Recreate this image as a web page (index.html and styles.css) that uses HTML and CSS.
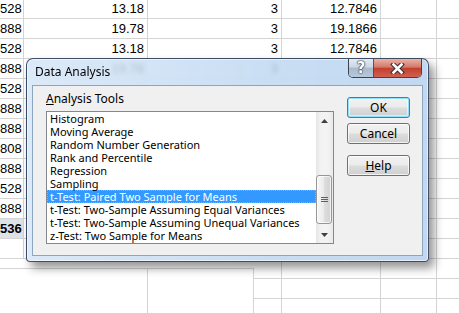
FILE: index.html
```html
<!DOCTYPE html>
<html>
	<head>
		<meta charset="UTF-8">
		<title>Data Analysis</title>
		<link rel="stylesheet" href="styles.css">
	</head>
	<body>
		<div id="screen">
			<div class="sheet">
				<div class="row"><div class="c0">528</div><div class="c1">13.18</div><div class="c2">3</div><div class="c3">12.7846</div><div class="c4"></div><div class="c5"></div></div>
				<div class="row"><div class="c0">888</div><div class="c1">19.78</div><div class="c2">3</div><div class="c3">19.1866</div><div class="c4"></div><div class="c5"></div></div>
				<div class="row"><div class="c0">528</div><div class="c1">13.18</div><div class="c2">3</div><div class="c3">12.7846</div><div class="c4"></div><div class="c5"></div></div>
				<div class="row"><div class="c0">888</div><div class="c1">19.78</div><div class="c2">3</div><div class="c3"></div><div class="c4"></div><div class="c5"></div></div>
				<div class="row"><div class="c0">528</div><div class="c1"></div><div class="c2"></div><div class="c3"></div><div class="c4"></div><div class="c5"></div></div>
				<div class="row"><div class="c0">888</div><div class="c1"></div><div class="c2"></div><div class="c3"></div><div class="c4"></div><div class="c5"></div></div>
				<div class="row"><div class="c0">888</div><div class="c1"></div><div class="c2"></div><div class="c3"></div><div class="c4"></div><div class="c5"></div></div>
				<div class="row"><div class="c0">808</div><div class="c1"></div><div class="c2"></div><div class="c3"></div><div class="c4"></div><div class="c5"></div></div>
				<div class="row"><div class="c0">888</div><div class="c1"></div><div class="c2"></div><div class="c3"></div><div class="c4"></div><div class="c5"></div></div>
				<div class="row"><div class="c0">528</div><div class="c1"></div><div class="c2"></div><div class="c3"></div><div class="c4"></div><div class="c5"></div></div>
				<div class="row"><div class="c0">888</div><div class="c1"></div><div class="c2"></div><div class="c3"></div><div class="c4"></div><div class="c5"></div></div>
				<div class="row"><div class="c0 sel">536</div><div class="c1"></div><div class="c2"></div><div class="c3"></div><div class="c4"></div><div class="c5"></div></div>
				<div class="row"><div class="c0"></div><div class="c1"></div><div class="c2"></div><div class="c3"></div><div class="c4"></div><div class="c5"></div></div>
			</div>
			<div class="foot">
				<div class="foot-left">
					<div class="foot-box"><div class="foot-cell"></div></div>
				</div>
				<div class="foot-right">
					<div class="row"><div class="f0"></div><div class="c3"></div><div class="c4"></div><div class="c5"></div></div>
					<div class="row"><div class="f0"></div><div class="c3"></div><div class="c4"></div><div class="c5"></div></div>
					<div class="row"><div class="f0"></div><div class="c3"></div><div class="c4"></div><div class="c5"></div></div>
				</div>
			</div>

			<div class="dialog">
				<div class="titlebar">
					<span class="title">Data Analysis</span>
					<div class="caption-btns">
						<span class="cb-help">?</span>
						<span class="cb-close">
							<svg width="15" height="11" viewBox="0 0 15 11">
								<path d="M3.5 1.5 L11.5 9.5 M11.5 1.5 L3.5 9.5" stroke="#3b2b2b" stroke-width="4.6" stroke-linecap="square"/>
								<path d="M3.5 1.5 L11.5 9.5 M11.5 1.5 L3.5 9.5" stroke="#fff" stroke-width="2.6" stroke-linecap="square"/>
							</svg>
						</span>
					</div>
				</div>
				<div class="client">
					<div class="tools">
						<div class="label"><u>A</u>nalysis Tools</div>
						<div class="listbox">
							<ul class="items">
								<li>Histogram</li>
								<li>Moving Average</li>
								<li>Random Number Generation</li>
								<li>Rank and Percentile</li>
								<li>Regression</li>
								<li>Sampling</li>
								<li class="on">t-Test: Paired Two Sample for Means</li>
								<li>t-Test: Two-Sample Assuming Equal Variances</li>
								<li>t-Test: Two-Sample Assuming Unequal Variances</li>
								<li>z-Test: Two Sample for Means</li>
							</ul>
							<div class="scrollbar">
								<div class="arrow">
									<svg width="7" height="4" viewBox="0 0 7 4"><path d="M0 4 L3.5 0 L7 4 Z" fill="#404040"/></svg>
								</div>
								<div class="track">
									<div class="thumb">
										<svg width="7" height="7" viewBox="0 0 7 7"><path d="M0 1.5 H7 M0 3.5 H7 M0 5.5 H7" stroke="#606060" stroke-width="1"/></svg>
									</div>
								</div>
								<div class="arrow">
									<svg width="7" height="4" viewBox="0 0 7 4"><path d="M0 0 L7 0 L3.5 4 Z" fill="#404040"/></svg>
								</div>
							</div>
						</div>
					</div>
					<div class="actions">
						<button class="btn btn-default">OK</button>
						<button class="btn">Cancel</button>
						<button class="btn btn-help"><u>H</u>elp</button>
					</div>
				</div>
			</div>
		</div>
	</body>
</html>
```

FILE: styles.css
```css
*{
	margin:0px;
	padding:0px;
	box-sizing:border-box;
}
body{
	background:#fff;
}
#screen{
	width:459px;
	height:313px;
	position:relative;
	overflow:hidden;
	font-family:"Liberation Sans", Arial, sans-serif;
}

/* spreadsheet behind the dialog */
.sheet{
	margin-top:-1px;
	font-size:13px;
	color:#000;
}
.row{
	display:flex;
	height:20px;
}
.row div{
	height:20px;
	border-right:1px solid #d4d4d4;
	border-bottom:1px solid #d4d4d4;
	text-align:right;
	padding-right:3px;
	line-height:19px;
	white-space:nowrap;
}
.row .c0{
	width:24px;
	padding-right:2px;
}
.row .sel{
	background:#dde2e9;
	font-weight:bold;
}
.row .c1{ width:124px; }
.row .c2{ width:134px; }
.row .c3{ width:99px; }
.row .c4{ width:56px; }
.row .c5{
	flex:1;
	border-right:0;
}
.foot{
	display:flex;
	height:60px;
}
.foot-left{
	width:254px;
	padding-top:9px;
}
.foot-box{
	height:100%;
	border-top:1px solid #d4d4d4;
	border-right:1px solid #d4d4d4;
}
.foot-cell{
	width:148px;
	height:100%;
	border-right:1px solid #d4d4d4;
}
.foot-right{
	flex:1;
}
.row .f0{ width:28px; }

/* dialog window */
.dialog{
	position:absolute;
	left:26px;
	top:58px;
	width:403px;
	height:204px;
	display:flex;
	flex-direction:column;
	padding:0 5px 5px;
	border:1px solid rgba(38,52,74,0.85);
	border-radius:7px 7px 4px 4px;
	background:linear-gradient(to right, rgba(214,230,247,0.86), rgba(192,216,241,0.84) 60%, rgba(183,210,238,0.86));
	-webkit-backdrop-filter:blur(2px);
	backdrop-filter:blur(2px);
	box-shadow:inset 0 0 0 1px rgba(255,255,255,0.55), 5px 6px 10px rgba(0,0,0,0.42);
	font-family:"Noto Sans", "Open Sans", sans-serif;
}
.titlebar{
	height:26px;
	display:flex;
	justify-content:space-between;
	align-items:flex-start;
}
.title{
	padding:5px 0 0 3px;
	font-size:12px;
	line-height:16px;
	color:#000;
}
.caption-btns{
	display:flex;
	margin-right:1px;
	height:19px;
	border:1px solid rgba(44,52,68,0.9);
	border-top:0;
	border-radius:0 0 5px 5px;
	overflow:hidden;
}
.cb-help{
	width:25px;
	border-right:1px solid rgba(44,52,68,0.8);
	background:linear-gradient(#e3ebf4, #cbd7e4 45%, #a9b9cc 50%, #b9c8da);
	color:#fff;
	font:bold 15px/18px "DejaVu Sans", sans-serif;
	text-align:center;
	text-shadow:0 0 1px #2a3340, 0 0 1px #2a3340, 0 0 2px #2a3340;
}
.cb-close{
	width:47px;
	display:flex;
	align-items:center;
	justify-content:center;
	background:linear-gradient(#eab3a6, #d47a68 45%, #c2402e 52%, #d06050);
}
.cb-close svg{
	display:block;
}

.client{
	flex:1;
	display:flex;
	padding:5px 0 0 13px;
	background:#f0f0f0;
	border:1px solid #8da6c0;
}
.tools{
	width:288px;
}
.label{
	font-size:12px;
	line-height:16px;
	color:#000;
}
.listbox{
	margin-top:4px;
	height:133px;
	display:flex;
	border:1px solid #828790;
	background:#fff;
}
.items{
	flex:1;
	list-style:none;
	font-size:11px;
}
.items li{
	height:13px;
	line-height:13px;
	padding-left:3px;
	white-space:nowrap;
	color:#000;
}
.items .on{
	background:#3399ff;
	color:#fff;
	border:1px dotted #f29a3a;
	padding-left:2px;
	line-height:11px;
}
.scrollbar{
	width:17px;
	display:flex;
	flex-direction:column;
	background:linear-gradient(to right, #e6e6e6, #f3f3f3 30%, #f3f3f3 70%, #e9e9e9);
}
.arrow{
	height:17px;
	display:flex;
	align-items:center;
	justify-content:center;
}
.arrow svg{
	display:block;
}
.track{
	flex:1;
	display:flex;
	flex-direction:column;
}
.thumb{
	margin:auto 1px 2px 0;
	height:49px;
	display:flex;
	align-items:center;
	justify-content:center;
	border:1px solid #979797;
	border-radius:3px;
	background:linear-gradient(to right, #f7f7f7, #ececec 45%, #dcdcdc 55%, #d2d2d2);
	box-shadow:inset 0 0 0 1px rgba(255,255,255,0.7);
}
.thumb svg{
	display:block;
}

.actions{
	margin-left:13px;
	padding-top:6px;
	display:flex;
	flex-direction:column;
}
.btn{
	width:63px;
	height:21px;
	border:1px solid #707070;
	border-radius:3px;
	background:linear-gradient(#f2f2f2, #ebebeb 48%, #dddddd 52%, #cfcfcf);
	box-shadow:inset 0 0 0 1px rgba(255,255,255,0.75);
	font-family:"Noto Sans", "Open Sans", sans-serif;
	font-size:12px;
	line-height:18px;
	color:#000;
	text-align:center;
	margin-top:5px;
}
.btn-default{
	margin-top:0;
	border-color:#3c7fb1;
	box-shadow:inset 0 0 0 1px #8fe0fb, inset 0 0 0 2px rgba(255,255,255,0.5);
}
.btn-help{
	margin-top:11px;
}
```
